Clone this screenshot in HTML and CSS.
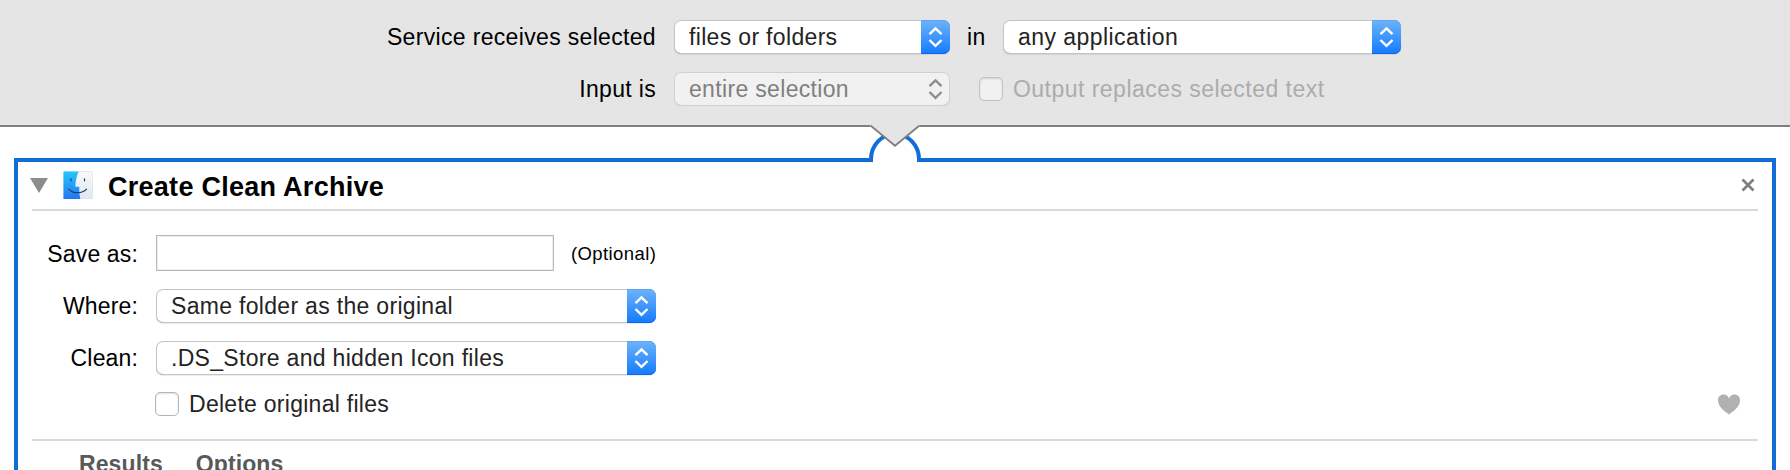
FILE: index.html
```html
<!DOCTYPE html>
<html lang="en">
<head>
<meta charset="utf-8">
<title>Create Clean Archive</title>
<link rel="stylesheet" href="styles.css">
</head>
<body>
<svg class="defs" width="0" height="0">
  <symbol id="arrows" viewBox="0 0 29 34"><path d="M8.500 14.200l6-5.800 6 5.800M8.500 20l6 5.800 6-5.800" fill="none" stroke="currentColor" stroke-width="2.400"/></symbol>
</svg>
<header class="service">
  <div class="service-row">
    <span class="service-label">Service receives selected</span>
    <div class="select select-type"><span class="select-text">files or folders</span><span class="stepper"><svg><use href="#arrows"/></svg></span></div>
    <span class="in">in</span>
    <div class="select select-app"><span class="select-text">any application</span><span class="stepper"><svg><use href="#arrows"/></svg></span></div>
  </div>
  <div class="service-row">
    <span class="service-label">Input is</span>
    <div class="select select-type disabled"><span class="select-text">entire selection</span><span class="stepper"><svg><use href="#arrows"/></svg></span></div>
    <span class="checkbox checkbox-output disabled"></span>
    <span class="output">Output replaces selected text</span>
  </div>
</header>
<main class="card">
  <svg class="connector" width="64" height="42" viewBox="863 122 64 42">
    <path d="M873 157h44v6h-44z" fill="#fff"/>
    <path d="M871 162v-3a24 25 0 0 1 48 0v3" fill="#fff" stroke="#126dd7" stroke-width="4"/>
    <path d="M870 122h50v4l-25 20-25-20z" fill="#e5e5e5"/>
    <path d="M870.500 125.500l24.500 20.300 24.500-20.300" fill="none" stroke="#808080" stroke-width="1.800"/>
  </svg>
  <div class="card-head">
    <svg class="triangle" width="18" height="15" viewBox="0 0 18 15"><path d="M0 0h18L9 15z" fill="#8c8c8c"/></svg>
    <svg class="finder" width="30" height="28" viewBox="0 0 30 28">
      <defs>
        <linearGradient id="blue" x2="0" y2="1"><stop stop-color="#24c8fb"/><stop offset="1" stop-color="#2475ef"/></linearGradient>
        <linearGradient id="pale" x2="0" y2="1"><stop stop-color="#f8f9fa"/><stop offset="1" stop-color="#dfe8f4"/></linearGradient>
      </defs>
      <rect x=".5" y=".5" width="29" height="27.500" rx="1" fill="url(#pale)" stroke="#d3dbe3" stroke-width=".6"/>
      <path d="M.5.5h15.200C13.500 5 12.600 10 12.300 15.800h4c-.2 4 .1 8 1 12.200H.5z" fill="url(#blue)"/>
      <path d="M8 7.800v2M21.500 7.800v2" stroke="#263c50" stroke-width="1.200" stroke-linecap="round"/>
      <path d="M6 18.300c4.500 4.600 13 4.600 17.500-.2" fill="none" stroke="#1d3850" stroke-width="1.200" stroke-linecap="round"/>
    </svg>
    <h1 class="title">Create Clean Archive</h1>
    <svg class="close" width="14" height="14" viewBox="0 0 14 14"><path d="M1.500 1.500l11 11M12.500 1.500l-11 11" stroke="#7e7e7e" stroke-width="2.700"/></svg>
  </div>
  <div class="card-body">
    <div class="field field-name"><span class="field-label">Save as:</span><input class="input" type="text" aria-label="Save as"><span class="optional">(Optional)</span></div>
    <div class="field"><span class="field-label">Where:</span><div class="select select-wide"><span class="select-text">Same folder as the original</span><span class="stepper"><svg><use href="#arrows"/></svg></span></div></div>
    <div class="field"><span class="field-label">Clean:</span><div class="select select-wide"><span class="select-text">.DS_Store and hidden Icon files</span><span class="stepper"><svg><use href="#arrows"/></svg></span></div></div>
    <div class="field field-delete">
      <span class="checkbox"></span><span class="delete">Delete original files</span>
      <svg class="heart" width="22" height="21" viewBox="0 0 22 21"><path d="M11 20.500C7 17.500 0 13 0 6.500 0 2.800 2.200.5 5.500.5 8 .5 10.200 2 11 4.500 11.800 2 14 .5 16.500.5 19.800.5 22 2.800 22 6.500 22 13 15 17.500 11 20.500z" fill="#b1b1b1"/></svg>
    </div>
  </div>
  <footer class="card-foot"><span>Results</span><span>Options</span></footer>
</main>
</body>
</html>
```
FILE: styles.css
```css
* { box-sizing: border-box; }
body {
  margin: 0;
  height: 470px;
  overflow: hidden;
  background: #fff;
  color: #000;
  font: 23px/34px "Liberation Sans", Arial, sans-serif;
  letter-spacing: 0.33px;
  white-space: nowrap;
}
svg { display: block; flex: none; }
.defs { position: absolute; }

.service {
  height: 127px;
  padding-top: 20px;
  display: flex;
  flex-direction: column;
  gap: 18px;
  background: #e5e5e5;
  border-bottom: 2px solid #808080;
}
.service-row { display: flex; height: 34px; align-items: center; }
.service-label { width: 656px; margin-right: 18px; text-align: right; }
.in { width: 53px; padding-left: 17px; }

.select {
  display: flex;
  height: 34px;
  flex: none;
  background: #fff;
  border-radius: 7px;
  color: #242424;
  box-shadow: inset 0 0 0 1px #c4c4c4, inset 0 -1px 0 #aaa, 0 1px 1px rgba(0, 0, 0, .08);
}
.select-type { width: 276px; }
.select-app { width: 398px; letter-spacing: .45px; }
.select-wide { width: 500px; letter-spacing: .31px; }
.select-text { flex: 1; padding-left: 15px; }
.stepper {
  width: 29px;
  height: 34px;
  color: #fff;
  border-radius: 0 7px 7px 0;
  background: linear-gradient(#6db3fa, #147bfe);
  box-shadow: inset 0 1px 0 #5ba5f2, inset 0 -1px 0 #0d65f5;
}
.stepper svg { width: 29px; height: 34px; }
.select.disabled {
  background: #f1f1f1;
  color: #7f7f7f;
  box-shadow: inset 0 0 0 1px #d0d0d0, inset 0 -1px 0 #c2c2c2;
}
.disabled .stepper { background: none; box-shadow: none; color: #8d8d8d; }

.checkbox {
  width: 24px;
  height: 24px;
  flex: none;
  border: 1px solid #b5b5b5;
  border-radius: 5px;
  background: #fff;
  box-shadow: inset 0 1px 2px rgba(0, 0, 0, .13);
}
.checkbox.disabled { background: #f1f1f1; border-color: #c3c3c3; }
.checkbox-output { margin-left: 29px; }
.output { margin-left: 10px; color: #acacac; letter-spacing: .47px; }

.card {
  position: relative;
  width: 1762px;
  height: 312px;
  margin: 31px 0 0 14px;
  padding: 0 14px;
  border: 4px solid #126dd7;
  border-bottom: 0;
}
.connector { position: absolute; left: 845px; top: -40px; }
.card-head {
  display: flex;
  height: 49px;
  border-bottom: 2px solid #d9d9d9;
}
.triangle { margin: 16px 15px 0 -2px; }
.finder { margin-top: 9px; }
.title { margin: 5px 0 0 15px; font-size: 27px; line-height: 40px; letter-spacing: .27px; }
.close { margin: 16px 3px 0 auto; }

.card-body {
  display: flex;
  flex-direction: column;
  gap: 18px;
  height: 230px;
  padding-top: 24px;
  border-bottom: 2px solid #d9d9d9;
}
.field { display: flex; height: 34px; align-items: center; }
.field-name { height: 36px; }
.field-label { width: 106px; margin-right: 18px; text-align: right; letter-spacing: .15px; }
.field-name .field-label { padding-top: 2px; }
.input {
  width: 398px;
  height: 36px;
  border: 1px solid #b8b8b8;
  box-shadow: inset 0 0 0 1px #eee;
  border-radius: 0;
  outline: 0;
  background: #fff;
}
.optional { margin-left: 17px; padding-top: 1px; font-size: 18.5px; letter-spacing: .4px; }
.field-delete { height: 24px; margin-top: -1px; padding-left: 123px; color: #242424; }
.delete { margin-left: 10px; letter-spacing: .27px; }
.heart { margin: 0 18px 0 auto; }
.card-foot {
  display: flex;
  gap: 33px;
  padding: 6px 0 0 47px;
  color: #595959;
  font-weight: bold;
  letter-spacing: .1px;
}
```
